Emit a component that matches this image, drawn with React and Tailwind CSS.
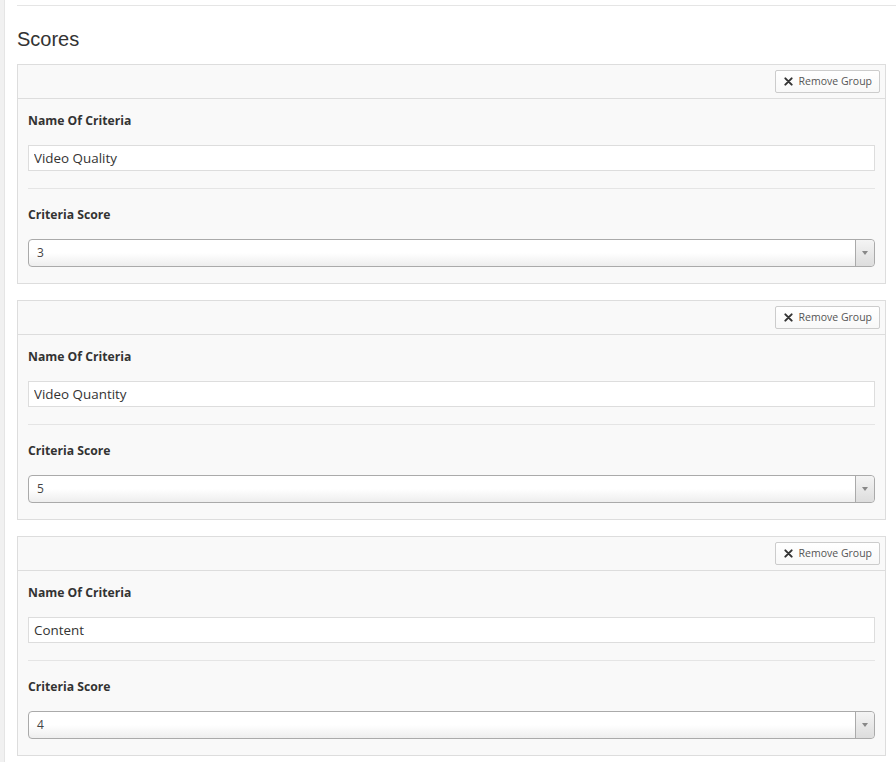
import { useState } from "react";

const groups = [
  { name: "Video Quality", score: "3" },
  { name: "Video Quantity", score: "5" },
  { name: "Content", score: "4" },
];

function RemoveButton() {
  return (
    <button
      type="button"
      className="flex h-[23px] items-center gap-[6px] rounded-[2px] border border-[#cccccc] bg-gradient-to-b from-white to-[#f8f8f8] pl-[8px] pr-[7px] text-[10.5px] text-[#555555]"
    >
      <svg width="9" height="9" viewBox="0 0 10 10" className="shrink-0">
        <path d="M1.5 1.5 L8.5 8.5 M8.5 1.5 L1.5 8.5" stroke="#333" strokeWidth="2.2" strokeLinecap="round" />
      </svg>
      <span>Remove Group</span>
    </button>
  );
}

function ScoreSelect({ value }) {
  return (
    <div className="flex h-[28px] items-stretch rounded-[4px] border border-[#aaaaaa] bg-gradient-to-b from-white via-white to-[#eeeeee]">
      <div className="flex flex-1 items-center pl-[8px] text-[12px] text-[#444444]">{value}</div>
      <div className="flex w-[19px] items-center justify-center rounded-r-[4px] border-l border-[#aaaaaa] bg-gradient-to-b from-[#f4f4f4] to-[#dddddd]">
        <svg width="6" height="4" viewBox="0 0 6 4">
          <path d="M0 0 L6 0 L3 4 Z" fill="#888" />
        </svg>
      </div>
    </div>
  );
}

function CriteriaGroup({ group }) {
  const [name, setName] = useState(group.name);
  return (
    <div className="border border-[#dddddd] bg-[#f9f9f9]">
      <div className="flex h-[34px] justify-end border-b border-[#dddddd] pr-[5px] pt-[5px]">
        <RemoveButton />
      </div>
      <div className="px-[10px] pb-[16px] pt-[13px]">
        <div className="h-[18px] text-[12.2px] font-bold leading-[18px] text-[#333333]">Name Of Criteria</div>
        <input
          value={name}
          onChange={(e) => setName(e.target.value)}
          className="mt-[15px] block h-[26px] w-full border border-[#dddddd] bg-white px-[5px] text-[13.4px] text-[#333333] outline-none"
        />
        <div className="mt-[17px] border-t border-[#e5e5e5]" />
        <div className="mt-[17px] h-[18px] text-[12.2px] font-bold leading-[18px] text-[#333333]">Criteria Score</div>
        <div className="mt-[15px]">
          <ScoreSelect value={group.score} />
        </div>
      </div>
    </div>
  );
}

export default function App() {
  return (
    <div className="flex min-h-[762px] bg-white font-['Open_Sans',sans-serif]">
      <div className="w-[5px] shrink-0 border-r border-[#e5e5e5] bg-[#f1f1f1]" />
      <div className="flex-1 pl-[12px] pr-[10px]">
        <div className="-mr-[10px] h-[6px] border-b border-[#e5e5e5]" />
        <h2 className="mt-[21px] font-['Liberation_Sans',Arial,sans-serif] text-[20px] leading-[24px] text-[#333333]">
          Scores
        </h2>
        <div className="mt-[13px] flex flex-col gap-[16px]">
          {groups.map((g) => (
            <CriteriaGroup key={g.name} group={g} />
          ))}
        </div>
      </div>
    </div>
  );
}
